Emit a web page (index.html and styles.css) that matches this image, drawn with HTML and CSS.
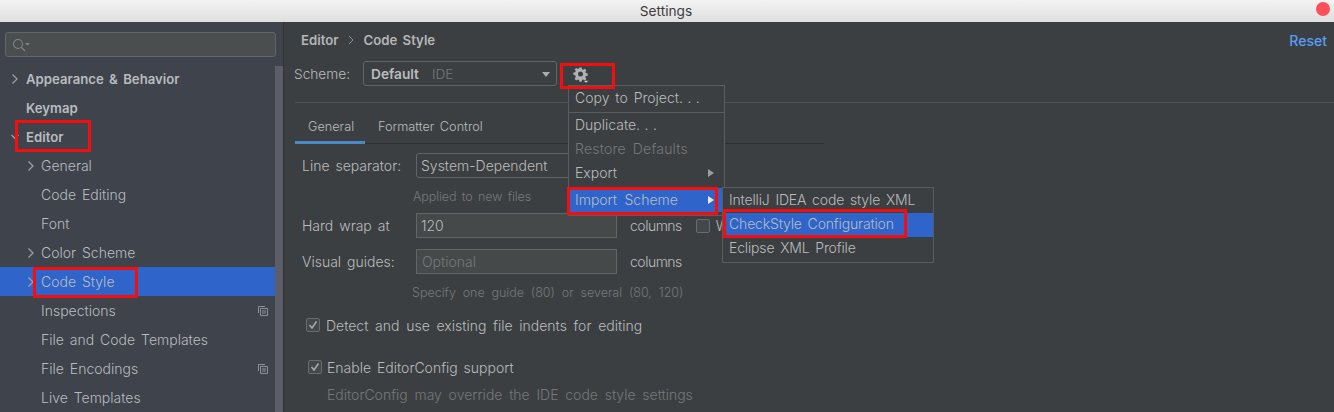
FILE: index.html
```html
<!doctype html>
<html>
<head>
	<meta charset="utf-8" />
	<title>Settings</title>
	<link rel="stylesheet" href="styles.css">
</head>
<body>
	<div class="titlebar">
		<span>Settings</span>
		<i class="closebtn"></i>
	</div>
	<div class="window">
		<div class="sidebar">
			<div class="search">
				<svg width="18" height="14" viewBox="0 0 18 14"><circle cx="6" cy="6" r="4.5" fill="none" stroke="#80858c" stroke-width="1.1"/><path d="M9.4 9.4 13 13" stroke="#80858c" stroke-width="1.2"/><path d="M13 5h5l-2.5 2.6z" fill="#80858c"/></svg>
			</div>
			<div class="tree">
				<div class="item top"><svg class="arrow" viewBox="0 0 8 12"><path d="M1.5 1.5 6 6l-4.500 4.500" /></svg>Appearance &amp; Behavior</div>
				<div class="item top">Keymap</div>
				<div class="item top"><svg class="arrow" viewBox="0 0 8 12"><path d="M0.500 4 4 7.500 7.500 4" /></svg>Editor</div>
				<div class="item sub"><svg class="arrow" viewBox="0 0 8 12"><path d="M1.5 1.5 6 6l-4.500 4.500" /></svg>General</div>
				<div class="item sub">Code Editing</div>
				<div class="item sub">Font</div>
				<div class="item sub"><svg class="arrow" viewBox="0 0 8 12"><path d="M1.5 1.5 6 6l-4.500 4.500" /></svg>Color Scheme</div>
				<div class="item sub selected"><svg class="arrow" viewBox="0 0 8 12"><path d="M1.5 1.5 6 6l-4.500 4.500" /></svg>Code Style</div>
				<div class="item sub">Inspections<svg class="copyicon" viewBox="0 0 10 10"><path d="M.5 7V.5H7M2.500 2.500h7v7h-7zM4 5h4M4 7h4" /></svg></div>
				<div class="item sub">File and Code Templates</div>
				<div class="item sub">File Encodings<svg class="copyicon" viewBox="0 0 10 10"><path d="M.5 7V.5H7M2.500 2.500h7v7h-7zM4 5h4M4 7h4" /></svg></div>
				<div class="item sub">Live Templates</div>
			</div>
			<div class="scrollbar"></div>
		</div>
		<div class="content">
			<div class="crumbs">
				<span>Editor</span><svg class="crumbsep" viewBox="0 0 6 10"><path d="M1 1l4 4-4 4" /></svg><span>Code Style</span>
				<a class="reset">Reset</a>
			</div>
			<div class="scheme">
				<span class="schemelabel">Scheme:</span>
				<div class="combo"><b>Default</b><span class="ide">IDE</span><i class="comboarrow"></i></div>
				<svg class="gear" width="18" height="18" viewBox="0 0 18 18"><path d="M7 1h2.400l.4 2 1.300.6 1.800-1.100 1.600 1.600-1.100 1.800.6 1.300 2 .4v2.400l-2 .4-.6 1.300 1.100 1.800-1.600 1.600-1.800-1.100-1.300.6-.4 2H7l-.4-2-1.300-.6-1.800 1.100-1.600-1.600L3 10.700l-.6-1.300-2-.4V6.600l2-.4L3 4.900 1.900 3.100l1.600-1.600 1.800 1.100 1.300-.6z" transform="translate(1 1.500) scale(.92)" fill="#afb1b3"/><circle cx="8.500" cy="9" r="2.500" fill="#3c3f41"/><path d="M11 15.500h6l-3 2.500z" fill="#dcdcdc" stroke="#3c3f41" stroke-width=".6"/></svg>
			</div>
			<div class="tabs">
				<span class="tab active">General</span>
				<span class="tab">Formatter Control</span>
			</div>
			<div class="form">
				<div class="row firstrow">
					<span class="rowlabel">Line separator:</span>
					<div class="field linesep">System-Dependent</div>
				</div>
				<div class="hint hint1">Applied to new files</div>
				<div class="row wraprow">
					<span class="rowlabel">Hard wrap at</span>
					<div class="field">120</div>
					<span class="unit">columns</span>
					<i class="checkbox"></i><span class="cutlabel">W</span>
				</div>
				<div class="row guidesrow">
					<span class="rowlabel">Visual guides:</span>
					<div class="field placeholder">Optional</div>
					<span class="unit">columns</span>
				</div>
				<div class="hint hint2">Specify one guide (80) or several (80, 120)</div>
				<label class="check detect"><i class="checkbox checked"><svg viewBox="0 0 12 12"><path d="M2.500 6 5 9l4.500-6.500" /></svg></i>Detect and use existing file indents for editing</label>
				<label class="check enable"><i class="checkbox checked"><svg viewBox="0 0 12 12"><path d="M2.500 6 5 9l4.500-6.500" /></svg></i>Enable EditorConfig support</label>
				<div class="hint hint3">EditorConfig may override the IDE code style settings</div>
			</div>
		</div>
	</div>

	<div class="menu mainmenu">
		<div class="menuitem">Copy to Project<span class="dots">...</span></div>
		<div class="menusep"></div>
		<div class="menuitem">Duplicate<span class="dots">...</span></div>
		<div class="menuitem disabled">Restore Defaults</div>
		<div class="menuitem">Export<i class="submark"></i></div>
		<div class="menuitem active importitem">Import Scheme<i class="submark"></i></div>
	</div>
	<div class="menu submenu">
		<div class="menuitem">IntelliJ IDEA code style XML</div>
		<div class="menuitem active">CheckStyle Configuration</div>
		<div class="menuitem">Eclipse XML Profile</div>
	</div>

	<!-- red boxes drawn on the screenshot -->
	<div class="mark mark-editor"></div>
	<div class="mark mark-codestyle"></div>
	<div class="mark mark-gear"></div>
	<div class="mark mark-import"></div>
	<div class="mark mark-checkstyle"></div>
</body>
</html>
```

FILE: styles.css
```css
*
{
	box-sizing: border-box;
}

html, body
{
	margin: 0;
	height: 412px;
	overflow: hidden;
}

body
{
	position: relative;
	font-family: "Inter", "Liberation Sans", sans-serif;
	font-size: 14px;
	word-spacing: 2px;
	color: #b9bcbe;
	background: #3c3f41;
}

.titlebar
{
	height: 22px;
	padding-right: 2px;
	display: flex;
	align-items: center;
	justify-content: center;
	position: relative;
	background: linear-gradient(#f3f3f3, #dfdfdf);
	color: #3d3d3d;
	font-size: 13.700px;
}

.closebtn
{
	position: absolute;
	top: 2px;
	right: 4px;
	width: 14px;
	height: 14px;
	border-radius: 50%;
	background: #f9505a;
}

.window
{
	display: flex;
	height: 390px;
}

/* left tree */
.sidebar
{
	width: 284px;
	flex: none;
	position: relative;
	background: #3e434c;
	border-right: 1px solid #323232;
}

.search
{
	margin: 10px 7px 0 5px;
	height: 25px;
	display: flex;
	align-items: center;
	padding-left: 6px;
	background: #4a4e4f;
	border: 1px solid #62666a;
	border-radius: 3px;
}

.tree
{
	padding-top: 7px;
}

.item
{
	height: 29px;
	display: flex;
	align-items: center;
	position: relative;
	font-size: 14px;
}

.top
{
	padding-left: 26px;
	font-weight: 600;
	font-size: 13.200px;
}

.sub
{
	padding-left: 41px;
	font-weight: 300;
}

.selected
{
	background: #2f65ca;
}

.arrow
{
	position: absolute;
	top: 9px;
	width: 8px;
	height: 12px;
	fill: none;
	stroke: #9da0a4;
	stroke-width: 1.3;
}

.top .arrow
{
	left: 11px;
}

.sub .arrow
{
	left: 27px;
}

.copyicon
{
	position: absolute;
	left: 258px;
	top: 10px;
	width: 10px;
	height: 10px;
	fill: none;
	stroke: #8c9196;
}

.scrollbar
{
	position: absolute;
	top: 44px;
	right: 0;
	bottom: 0;
	width: 8px;
	background: #5b5e68;
}

.selected::after
{
	content: "";
	position: absolute;
	top: 0;
	right: 0;
	bottom: 0;
	width: 8px;
	background: #4a6cb8;
}

/* right side */
.content
{
	flex: 1;
	min-width: 0;
	padding-left: 11px;
}

.crumbs
{
	height: 36px;
	padding: 0 7px 0 6px;
	display: flex;
	align-items: center;
	font-weight: 600;
	font-size: 13.200px;
	color: #b4b6b8;
}

.crumbsep
{
	width: 6px;
	height: 10px;
	margin: 0 9px 0 10px;
	fill: none;
	stroke: #8e9194;
}

.reset
{
	margin-left: auto;
	color: #589df6;
	font-weight: 500;
	font-size: 14px;
}

.scheme
{
	height: 45px;
	padding-bottom: 13px;
	border-bottom: 1px solid #515151;
	display: flex;
	align-items: center;
	font-weight: 300;
	font-size: 13.700px;
}

.schemelabel
{
	width: 69px;
	margin-left: -1px;
}

.combo
{
	width: 194px;
	height: 25px;
	display: flex;
	align-items: center;
	padding-left: 7px;
	border: 1px solid #646464;
	border-radius: 3px;
	position: relative;
	background: #3c3f41;
}

.combo b
{
	font-weight: 600;
}

.ide
{
	margin-left: 13px;
	color: #75787a;
}

.comboarrow
{
	position: absolute;
	right: 6px;
	top: 10px;
	border: 4px solid transparent;
	border-top: 5px solid #a9abad;
	border-bottom: none;
}

.gear
{
	margin-left: 15px;
}

.tabs
{
	width: 529px;
	height: 41px;
	display: flex;
	align-items: flex-end;
	border-bottom: 1px solid #323232;
	font-size: 12.700px;
	font-weight: 300;
}

.tab
{
	height: 26px;
	padding: 1px 12px 0 13px;
	margin-bottom: -1px;
}

.tab.active
{
	width: 70px;
	border-bottom: 3px solid #4a88c7;
}

.form
{
	font-weight: 300;
}

.row
{
	display: flex;
	align-items: center;
	height: 25px;
	padding-left: 7px;
}

.firstrow
{
	margin-top: 9px;
}

.rowlabel
{
	width: 114px;
}

.field
{
	width: 201px;
	height: 25px;
	padding-left: 4px;
	line-height: 23px;
	background: #45494a;
	border: 1px solid #646464;
}

.linesep
{
	border-radius: 3px;
	background: #3c3f41;
}

.placeholder
{
	padding-left: 5px;
	color: #75787a;
}

.unit
{
	margin-left: 13px;
	letter-spacing: -0.500px;
}

.checkbox
{
	flex: none;
	display: inline-block;
	width: 14px;
	height: 14px;
	border: 1px solid #6b6b6b;
	border-radius: 2px;
	background: #43494a;
}

.wraprow .checkbox
{
	margin-left: 14px;
}

.cutlabel
{
	margin-left: 6px;
}

.checked svg
{
	display: block;
	width: 12px;
	height: 12px;
	fill: none;
	stroke: #a7a9ab;
	stroke-width: 1.6;
}

.hint
{
	font-size: 12.500px;
	color: #75787a;
	line-height: 16px;
}

.hint1
{
	margin: 11px 0 8px 118px;
	letter-spacing: -0.100px;
}

.wraprow
{
	margin-bottom: 11px;
}

.hint2
{
	margin: 11px 0 0 117px;
	word-spacing: 3.300px;
}

.check
{
	display: flex;
	align-items: center;
	gap: 6px;
	height: 18px;
	word-spacing: 2.800px;
}

.detect
{
	margin: 15px 0 0 11px;
}

.enable
{
	margin: 24px 0 0 13px;
	gap: 5px;
	word-spacing: 2px;
}

.hint3
{
	margin: 11px 0 0 32px;
	font-size: 14px;
	word-spacing: 2.800px;
}

/* popups */
.menu
{
	position: absolute;
	background: #3c3f41;
	border: 1px solid #5a5d5f;
	font-weight: 300;
}

.mainmenu
{
	left: 568px;
	top: 85px;
	width: 157px;
	height: 131px;
}

.submenu
{
	left: 722px;
	top: 187px;
	width: 212px;
	height: 76px;
	padding-top: 1px;
	letter-spacing: -0.150px;
}

.menuitem
{
	height: 24px;
	line-height: 24px;
	padding-left: 6px;
	position: relative;
	white-space: nowrap;
}

.submenu .menuitem
{
	line-height: 22px;
}

.dots
{
	letter-spacing: 4.500px;
}

.menusep
{
	height: 1px;
	margin: 2px 0 0;
	background: #5a5d5f;
}

.disabled
{
	color: #75787a;
	word-spacing: 3px;
	letter-spacing: 0.200px;
}

.menuitem.active
{
	background: #2f65ca;
}

.importitem
{
	margin-top: 3px;
	word-spacing: 3.500px;
}

.submark
{
	position: absolute;
	right: 10px;
	top: 8px;
	border: 4px solid transparent;
	border-left: 6px solid #9a9c9e;
	border-right: none;
}

.active .submark
{
	border-left-color: #e8e8e8;
}

/* annotations */
.mark
{
	position: absolute;
	border: 3px solid #f60d0d;
}

.mark-editor
{
	left: 15px;
	top: 120px;
	width: 76px;
	height: 32px;
}

.mark-codestyle
{
	left: 33px;
	top: 267px;
	width: 105px;
	height: 31px;
}

.mark-gear
{
	left: 560px;
	top: 63px;
	width: 55px;
	height: 26px;
}

.mark-import
{
	left: 567px;
	top: 187px;
	width: 151px;
	height: 28px;
}

.mark-checkstyle
{
	left: 723px;
	top: 209px;
	width: 184px;
	height: 29px;
}
```
